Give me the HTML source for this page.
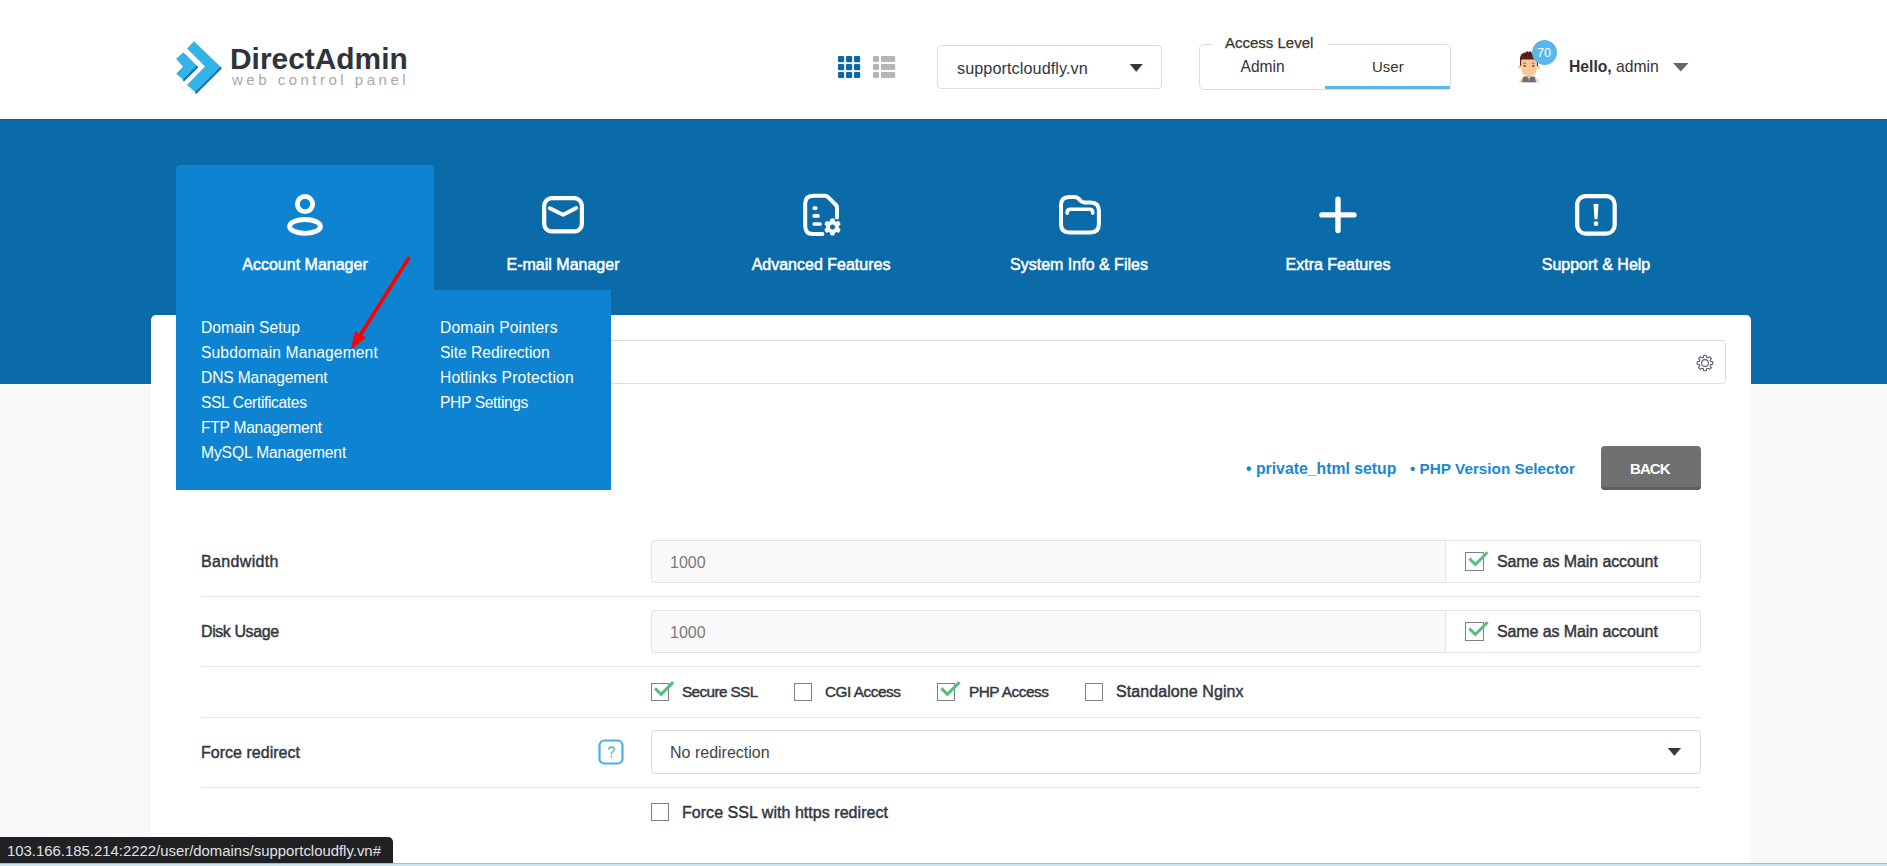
<!DOCTYPE html>
<html><head><meta charset="utf-8">
<style>
html,body{margin:0;padding:0;}
body{width:1887px;height:866px;overflow:hidden;position:relative;background:#f8f8f8;font-family:"Liberation Sans",sans-serif;color:#333;}
.a{position:absolute;}
.t{position:absolute;line-height:1;white-space:nowrap;}
.hdr{position:absolute;left:0;top:0;width:1887px;height:119px;background:#fff;}
.bar{position:absolute;left:0;top:119px;width:1887px;height:265px;background:#0b6aa8;}
.tabact{position:absolute;left:176px;top:165px;width:258px;height:126px;background:#0d83d1;border-radius:4px 4px 0 0;}
.drop{position:absolute;left:176px;top:290px;width:435px;height:200px;background:#0d83d1;}
.navlbl{position:absolute;top:256.9px;width:258px;text-align:center;color:#fff;font-weight:normal;font-size:16px;line-height:1;white-space:nowrap;-webkit-text-stroke:0.5px #fff;}
.nicon{position:absolute;top:190px;}
.card{position:absolute;left:151px;top:315px;width:1600px;height:600px;background:#fff;border-radius:5px;}
.mi{position:absolute;color:#fff;font-size:15.6px;line-height:1;white-space:nowrap;}
.sep{position:absolute;left:201px;width:1500px;height:1px;background:#e6e6e6;}
.lbl{position:absolute;left:201px;font-weight:normal;font-size:16px;line-height:1;color:#33373f;white-space:nowrap;-webkit-text-stroke:0.45px #33373f;}
.inp{position:absolute;left:651px;width:794px;height:41px;background:#f9f9f9;border:1px solid #e3e3e3;border-right:none;border-radius:4px 0 0 4px;}
.addon{position:absolute;left:1445px;width:254px;height:41px;background:#fff;border:1px solid #e3e3e3;border-radius:0 4px 4px 0;}
.cb{position:absolute;width:16px;height:16px;border:1px solid #7a808c;background:#fff;}
.cbl{position:absolute;font-weight:normal;font-size:16px;line-height:1;color:#33373f;white-space:nowrap;-webkit-text-stroke:0.45px #33373f;}
</style></head>
<body>
<div class="hdr">
  <!-- logo -->
  <svg class="a" style="left:170px;top:36px" width="60" height="62" viewBox="170 36 60 62">
    <polygon points="187,48.6 194,41.3 221,67.2 195.6,92.6 187,85 205,66.6" fill="#33b4e8"/>
    <polygon points="220.6,66.8 222,68.2 196.2,94 194.8,92.4" fill="#0c6fc0"/>
    <polygon points="176.2,58.7 183.4,52.2 197.2,66 183.4,80.1 176.2,73.7 183,66.8" fill="#33b4e8"/>
    <polygon points="196.8,65.6 198.4,67.2 184,81.6 182.6,80" fill="#0c6fc0"/>
  </svg>
  <div class="t" style="left:230px;top:43.7px;font-size:29.9px;font-weight:bold;color:#2f333b;letter-spacing:0px">DirectAdmin</div>
  <div class="t" style="left:232px;top:72px;font-size:15px;color:#a8a8a8;letter-spacing:3.5px">web control panel</div>

  <!-- grid/list icons -->
  <svg class="a" style="left:838px;top:56px" width="60" height="23" viewBox="0 0 60 23">
    <g fill="#0b68a8">
      <rect x="0" y="0" width="6.2" height="6.2" rx="1.1"/><rect x="8" y="0" width="6.2" height="6.2" rx="1.1"/><rect x="16" y="0" width="6.2" height="6.2" rx="1.1"/>
      <rect x="0" y="8" width="6.2" height="6.2" rx="1.1"/><rect x="8" y="8" width="6.2" height="6.2" rx="1.1"/><rect x="16" y="8" width="6.2" height="6.2" rx="1.1"/>
      <rect x="0" y="16" width="6.2" height="6" rx="1.1"/><rect x="8" y="16" width="6.2" height="6" rx="1.1"/><rect x="16" y="16" width="6.2" height="6" rx="1.1"/>
    </g>
    <g fill="#b5b5b5">
      <rect x="35" y="0" width="6" height="6" rx="1.1"/><rect x="43" y="0" width="14.2" height="6" rx="1.1"/>
      <rect x="35" y="8" width="6" height="6" rx="1.1"/><rect x="43" y="8" width="14.2" height="6" rx="1.1"/>
      <rect x="35" y="16" width="6" height="6" rx="1.1"/><rect x="43" y="16" width="14.2" height="6" rx="1.1"/>
    </g>
  </svg>

  <!-- domain select -->
  <div class="a" style="left:937px;top:45px;width:223px;height:42px;border:1px solid #dcdcdc;border-radius:4px;background:#fff"></div>
  <div class="t" style="left:957px;top:59.5px;font-size:16.2px;color:#303644;letter-spacing:0.09px">supportcloudfly.vn</div>
  <svg class="a" style="left:1130px;top:63.5px" width="13" height="8" viewBox="0 0 13 8"><polygon points="0,0 12.5,0 6.25,7.5" fill="#333842" stroke="#333842" stroke-width="0.5" stroke-linejoin="round"/></svg>

  <!-- access level -->
  <div class="a" style="left:1199px;top:44px;width:250px;height:44px;border:1px solid #dcdcdc;border-radius:5px"></div>
  <div class="a" style="left:1213px;top:40px;width:115px;height:8px;background:#fff"></div>
  <div class="t" style="left:1225px;top:35px;font-size:15px;color:#333;-webkit-text-stroke:0.25px #333">Access Level</div>
  <div class="t" style="left:1240.5px;top:58.7px;font-size:15.6px;color:#333">Admin</div>
  <div class="t" style="left:1372px;top:58.7px;font-size:15px;color:#333">User</div>
  <div class="a" style="left:1325px;top:86px;width:125px;height:3px;background:#5db5eb"></div>

  <!-- avatar -->
  <svg class="a" style="left:1516px;top:50px" width="26" height="34" viewBox="0 0 26 34">
    <path d="M4,16.5 L4,8 Q4.2,3 9.5,2.4 L11.2,1 L12.4,2.2 L14.4,0.9 L15.2,2.4 Q21.8,3 22,8.5 L22,16.5 L20.6,16.5 L20.6,9.7 L5.5,9.7 L5.5,16.5 Z" fill="#5c2119"/>
    <ellipse cx="3.6" cy="16.9" rx="1.4" ry="2" fill="#fcc896"/>
    <ellipse cx="22.6" cy="16.9" rx="1.4" ry="2" fill="#fcc896"/>
    <rect x="10.7" y="24" width="4.4" height="4" fill="#f1b27c"/>
    <path d="M2.9,32.2 L6.5,27 L19.5,27 L23.2,32.2 Z" fill="#fcc896"/>
    <path d="M6,32.2 L7.5,26.6 L18.5,26.6 L20,32.2 Z" fill="#6b6b72"/>
    <path d="M11.4,26.6 L13,32.2 L14.6,26.6 Z" fill="#e8e8ec"/>
    <path d="M12.4,28 L13.6,28 L13.3,32.2 L12.7,32.2 Z" fill="#4a4a66"/>
    <path d="M5.5,9.7 L20.6,9.7 L20.6,19.2 Q20.6,25.9 13.05,25.9 Q5.5,25.9 5.5,19.2 Z" fill="#fcc896"/>
    <rect x="7.3" y="12.7" width="2.6" height="0.9" fill="#8a4a3a"/>
    <rect x="15.9" y="12.7" width="2.6" height="0.9" fill="#8a4a3a"/>
    <rect x="7.7" y="15.2" width="1.9" height="1.5" fill="#3a2a22"/>
    <rect x="16.3" y="15.2" width="1.9" height="1.5" fill="#3a2a22"/>
    <rect x="9" y="4.6" width="1" height="1" fill="#1a0a08"/>
    <rect x="12.5" y="4.6" width="1" height="1" fill="#1a0a08"/>
  </svg>
  <div class="a" style="left:1532px;top:40px;width:25px;height:25px;border-radius:50%;background:#5ab7ed"></div>
  <div class="t" style="left:1537px;top:46.5px;font-size:12.5px;color:#fff">70</div>
  <div class="t" style="left:1569px;top:59px;font-size:15.7px;color:#333"><b>Hello,</b> admin</div>
  <svg class="a" style="left:1673px;top:63px" width="16" height="9" viewBox="0 0 16 9"><polygon points="0,0 15.5,0 7.75,8.5" fill="#666"/></svg>
</div>

<div class="bar"></div>
<div class="a" style="left:0;top:119px;width:1887px;height:1px;background:#0a5c9f"></div>
<div class="card"></div>
<div class="tabact"></div>

<!-- nav icons -->
<svg class="a" style="left:279px;top:188px" width="52" height="52" viewBox="0 0 52 52">
  <circle cx="26" cy="16.05" r="7.65" fill="none" stroke="#fff" stroke-width="4.8"/>
  <ellipse cx="26" cy="38.4" rx="15.4" ry="6.9" fill="none" stroke="#fff" stroke-width="4.8"/>
</svg>
<svg class="a" style="left:537px;top:188px" width="52" height="52" viewBox="0 0 52 52">
  <rect x="7.2" y="10.2" width="37.7" height="33.2" rx="7.5" fill="none" stroke="#fff" stroke-width="4.2"/>
  <path d="M12.8,20.2 L26.1,26.8 L39.2,20" fill="none" stroke="#fff" stroke-width="3.8" stroke-linecap="round" stroke-linejoin="round"/>
</svg>
<svg class="a" style="left:796px;top:188px" width="52" height="52" viewBox="0 0 52 52">
  <path d="M26.4,46.1 L17.2,46.1 Q9.2,46.1 9.2,38.1 L9.2,15.8 Q9.2,7.8 17.2,7.8 L29.6,7.8 Q30.8,7.8 31.8,8.8 L40,17 Q41,18 41,19.4 L41,29.4" fill="none" stroke="#fff" stroke-width="4" stroke-linecap="round" stroke-linejoin="round"/>
  <path d="M18.2,20.1 L19.8,20.1 M18.2,27.9 L22,27.9 M18.2,36 L24,36" stroke="#fff" stroke-width="3.7" stroke-linecap="round"/>
  <g transform="translate(36.5,38.9)">
    <circle r="6.4" fill="#fff"/>
    <g fill="#fff"><rect x="-2.3" y="-8.5" width="4.6" height="17" rx="1.4"/><rect x="-2.3" y="-8.5" width="4.6" height="17" rx="1.4" transform="rotate(60)"/><rect x="-2.3" y="-8.5" width="4.6" height="17" rx="1.4" transform="rotate(120)"/></g>
    <circle r="2.5" fill="#0b6aa8"/>
  </g>
</svg>
<svg class="a" style="left:1054px;top:188px" width="52" height="52" viewBox="0 0 52 52">
  <path d="M7,17.5 Q7,9.1 15.4,9.1 L20,9.1 Q23,9.1 25,11 L26.8,12.8 Q28.2,14.4 30.5,14.4 L36.5,14.4 Q44.9,14.4 44.9,22.8 L44.9,36 Q44.9,44.4 36.5,44.4 L15.4,44.4 Q7,44.4 7,36 Z" fill="none" stroke="#fff" stroke-width="4" stroke-linejoin="round"/>
  <path d="M13.2,25.2 L13.2,24.6 Q13.2,21.3 16.5,21.3 L35.4,21.3 Q38.7,21.3 38.7,24.6 L38.7,25.2" fill="none" stroke="#fff" stroke-width="3.6" stroke-linecap="round"/>
</svg>
<svg class="a" style="left:1312px;top:188px" width="52" height="52" viewBox="0 0 52 52">
  <path d="M26,11.1 L26,42.6 M9.9,26.9 L42,26.9" stroke="#fff" stroke-width="5.4" stroke-linecap="round"/>
</svg>
<svg class="a" style="left:1570px;top:188px" width="52" height="52" viewBox="0 0 52 52">
  <rect x="7.2" y="8.1" width="37.5" height="37.5" rx="8.5" fill="none" stroke="#fff" stroke-width="4.2"/>
  <path d="M23.5,16.6 Q23.5,15.9 24.2,15.9 L27.8,15.9 Q28.5,15.9 28.5,16.6 L27.6,30.4 Q27.5,31.2 26.8,31.2 L25.2,31.2 Q24.5,31.2 24.4,30.4 Z" fill="#fff"/>
  <circle cx="26" cy="35.7" r="2.4" fill="#fff"/>
</svg>

<div class="navlbl" style="left:176px">Account Manager</div>
<div class="navlbl" style="left:434px">E-mail Manager</div>
<div class="navlbl" style="left:692px">Advanced Features</div>
<div class="navlbl" style="left:950px">System Info &amp; Files</div>
<div class="navlbl" style="left:1209px">Extra Features</div>
<div class="navlbl" style="left:1467px">Support &amp; Help</div>

<!-- search -->
<div class="a" style="left:400px;top:340px;width:1324px;height:42px;border:1px solid #dcdcdc;border-radius:4px;background:#fff"></div>
<svg class="a" style="left:1692.5px;top:350.5px" width="24" height="24" viewBox="0 0 24 24">
  <path fill="none" stroke="#575d6a" stroke-width="1.1" stroke-linejoin="round" d="M10.42,6.31 L10.70,4.21 L13.30,4.21 L13.58,6.31 L14.91,6.86 L16.59,5.57 L18.43,7.41 L17.14,9.09 L17.69,10.42 L19.79,10.70 L19.79,13.30 L17.69,13.58 L17.14,14.91 L18.43,16.59 L16.59,18.43 L14.91,17.14 L13.58,17.69 L13.30,19.79 L10.70,19.79 L10.42,17.69 L9.09,17.14 L7.41,18.43 L5.57,16.59 L6.86,14.91 L6.31,13.58 L4.21,13.30 L4.21,10.70 L6.31,10.42 L6.86,9.09 L5.57,7.41 L7.41,5.57 L9.09,6.86 Z"/>
  <circle cx="12" cy="12" r="3.4" fill="none" stroke="#575d6a" stroke-width="1.1"/>
</svg>

<!-- dropdown -->
<div class="drop"></div>
<div class="mi" style="left:201px;top:320px">Domain Setup</div>
<div class="mi" style="left:201px;top:345px;letter-spacing:0.13px">Subdomain Management</div>
<div class="mi" style="left:201px;top:370px;letter-spacing:-0.13px">DNS Management</div>
<div class="mi" style="left:201px;top:395px;letter-spacing:-0.35px">SSL Certificates</div>
<div class="mi" style="left:201px;top:420px;letter-spacing:-0.26px">FTP Management</div>
<div class="mi" style="left:201px;top:445px;letter-spacing:-0.1px">MySQL Management</div>
<div class="mi" style="left:440px;top:320px;letter-spacing:0.16px">Domain Pointers</div>
<div class="mi" style="left:440px;top:345px;letter-spacing:-0.03px">Site Redirection</div>
<div class="mi" style="left:440px;top:370px;letter-spacing:0.2px">Hotlinks Protection</div>
<div class="mi" style="left:440px;top:395px;letter-spacing:-0.37px">PHP Settings</div>

<!-- red arrow -->
<svg class="a" style="left:340px;top:250px" width="80" height="110" viewBox="340 250 80 110">
  <line x1="408.6" y1="258.3" x2="361" y2="334" stroke="#ff0000" stroke-width="3.6" stroke-linecap="round"/>
  <polygon points="350.8,349.7 355.2,331.3 366,337.6" fill="#ff0000"/>
</svg>

<!-- links + back -->
<div class="t" style="left:1246px;top:461.3px;font-size:15.8px;font-weight:bold;color:#1a87d1">• private_html setup</div>
<div class="t" style="left:1410px;top:461.3px;font-size:15.3px;font-weight:bold;color:#1a87d1">• PHP Version Selector</div>
<div class="a" style="left:1601px;top:446px;width:100px;height:44px;background:#6f7170;border-radius:4px;box-shadow:inset 0 -3px 0 #5d5e62"></div>
<div class="t" style="left:1630px;top:461.3px;font-size:15px;font-weight:bold;color:#fff;letter-spacing:-0.9px">BACK</div>

<!-- rows -->
<div class="lbl" style="top:554px;letter-spacing:0.35px">Bandwidth</div>
<div class="inp" style="top:540px"></div>
<div class="t" style="left:670px;top:554.5px;font-size:16px;color:#7a7a7a">1000</div>
<div class="addon" style="top:540px"></div>
<div class="cb" style="left:1465px;top:552px;width:17px;height:17px"></div>
<div class="cbl" style="left:1497px;top:554px;letter-spacing:-0.1px">Same as Main account</div>
<div class="sep" style="top:596px"></div>

<div class="lbl" style="top:624px;letter-spacing:-0.42px">Disk Usage</div>
<div class="inp" style="top:610px"></div>
<div class="t" style="left:670px;top:624.5px;font-size:16px;color:#7a7a7a">1000</div>
<div class="addon" style="top:610px"></div>
<div class="cb" style="left:1465px;top:622px;width:17px;height:17px"></div>
<div class="cbl" style="left:1497px;top:624.2px;letter-spacing:-0.1px">Same as Main account</div>
<div class="sep" style="top:666px"></div>

<div class="cb" style="left:651px;top:683px"></div>
<div class="cbl" style="left:682px;top:684px;font-size:15.3px;letter-spacing:-0.6px">Secure SSL</div>
<div class="cb" style="left:794px;top:683px"></div>
<div class="cbl" style="left:825px;top:684px;font-size:15.3px;letter-spacing:-0.45px">CGI Access</div>
<div class="cb" style="left:937px;top:683px"></div>
<div class="cbl" style="left:969px;top:684px;font-size:15.3px;letter-spacing:-0.45px">PHP Access</div>
<div class="cb" style="left:1085px;top:683px"></div>
<div class="cbl" style="left:1116px;top:684px;letter-spacing:0.08px">Standalone Nginx</div>
<div class="sep" style="top:717px"></div>

<div class="lbl" style="top:745px;letter-spacing:0.02px">Force redirect</div>
<svg class="a" style="left:597px;top:738px" width="28" height="28" viewBox="0 0 28 28">
  <rect x="2.5" y="2.5" width="23" height="23" rx="5" fill="none" stroke="#4aaeeb" stroke-width="2.2"/>
  <path d="M11.7,11.2 Q11.9,9 14.5,9 Q17.3,9 17.3,11.3 Q17.3,12.8 15.6,13.7 Q14.5,14.4 14.5,16.1" fill="none" stroke="#4aaeeb" stroke-width="1.3" stroke-linecap="round"/>
  <rect x="13.7" y="17.6" width="1.5" height="1.5" fill="#4aaeeb" transform="rotate(45 14.45 18.35)"/>
</svg>
<div class="a" style="left:651px;top:730px;width:1048px;height:42px;border:1px solid #dcdcdc;border-radius:4px;background:#fff"></div>
<div class="t" style="left:670px;top:745px;font-size:16px;color:#444">No redirection</div>
<svg class="a" style="left:1668px;top:748.3px" width="13" height="8" viewBox="0 0 13 8"><polygon points="0,0 12.8,0 6.4,7.6" fill="#333842" stroke="#333842" stroke-width="0.5" stroke-linejoin="round"/></svg>
<div class="sep" style="top:787px"></div>

<div class="cb" style="left:651px;top:803px"></div>
<div class="cbl" style="left:682px;top:805px;letter-spacing:0.04px">Force SSL with https redirect</div>

<!-- checkmarks -->
<svg class="a" style="left:0;top:0;pointer-events:none" width="1887" height="866" viewBox="0 0 1887 866">
  <g fill="none" stroke="#52bf7d" stroke-width="3" stroke-linecap="butt" stroke-linejoin="miter">
    <path d="M1469.4,558.6 L1475.4,564.5 L1487.5,552.3"/><path d="M1469.4,628.6 L1475.4,634.5 L1487.5,622.3"/><path d="M655.1,688.4 L661.1,694.3 L673.2,682.1"/><path d="M941.4,688.4 L947.4,694.3 L959.5,682.1"/>
  </g>
</svg>

<!-- status bar -->
<div class="a" style="left:0;top:837px;width:393px;height:26px;background:#202124;border-radius:0 5px 0 0"></div>
<div class="t" style="left:7px;top:844px;font-size:14.9px;color:#e2e2e2">103.166.185.214:2222/user/domains/supportcloudfly.vn#</div>
<div class="a" style="left:0;top:863px;width:1887px;height:1px;background:#9fbfc6"></div>
<div class="a" style="left:0;top:864px;width:1887px;height:2px;background:#cde6ec"></div>
</body></html>
